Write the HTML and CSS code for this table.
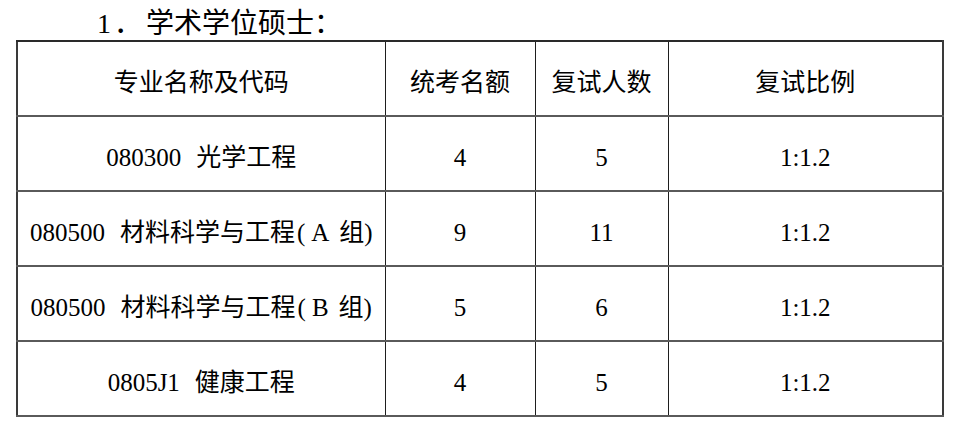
FILE: index.html
```html
<!DOCTYPE html>
<html lang="zh-CN">
<head>
<meta charset="utf-8">
<link rel="stylesheet" href="styles.css">
</head>
<body>
<div class="page">
  <h2 class="title"><span class="tnum">1</span><span class="tdot">．</span>学术学位硕士：</h2>
  <table class="grid">
    <colgroup>
      <col class="c1"><col class="c2"><col class="c3"><col class="c4">
    </colgroup>
    <thead>
      <tr><th>专业名称及代码</th><th>统考名额</th><th>复试人数</th><th>复试比例</th></tr>
    </thead>
    <tbody>
      <tr><td><span class="num">080300</span>光学工程</td><td>4</td><td>5</td><td>1:1.2</td></tr>
      <tr><td><span class="num">080500</span>材料科学与工程<span class="p-open">(</span><span class="p-a">A</span><span class="p-z">组</span><span class="p-close">)</span></td><td>9</td><td>11</td><td>1:1.2</td></tr>
      <tr><td><span class="num">080500</span>材料科学与工程<span class="p-open">(</span><span class="p-a">B</span><span class="p-z">组</span><span class="p-close">)</span></td><td>5</td><td>6</td><td>1:1.2</td></tr>
      <tr><td><span class="num">0805J1</span>健康工程</td><td>4</td><td>5</td><td>1:1.2</td></tr>
    </tbody>
  </table>
</div>
</body>
</html>
```
FILE: styles.css
```css
html, body {
  margin: 0;
  padding: 0;
  background: #fff;
}
.page {
  padding: 0 0 0 16px;
  font-family: "Liberation Serif", "Noto Sans CJK SC", serif;
  color: #000;
}
.title {
  margin: 0;
  padding: 6px 0 0 81px;
  height: 34px;
  font-size: 28px;
  font-weight: normal;
  line-height: 30px;
  white-space: nowrap;
}
.tdot {
  display: inline-block;
  width: 32px;
  padding-left: 3px;
  font-family: "Noto Sans CJK SC", sans-serif;
}
.grid {
  border-collapse: collapse;
  width: 926px;
  table-layout: fixed;
  font-size: 25px;
}
.c1 { width: 368px; }
.c2 { width: 150px; }
.c3 { width: 133px; }
.c4 { width: 275px; }
.grid th, .grid td {
  border-left: 1px solid #1e1e1e;
  border-right: 1px solid #1e1e1e;
  border-top: 2px solid #5a5a5a;
  border-bottom: 2px solid #5a5a5a;
  height: 64px;
  padding: 9px 0 0 0;
  text-align: center;
  vertical-align: middle;
  font-weight: normal;
  white-space: nowrap;
  line-height: 30px;
}
.grid th {
  border-top: 2px solid #2a2a2a;
}
.grid td:first-child, .grid th:first-child {
  border-left: 2px solid #3a3a3a;
}
.grid td:last-child, .grid th:last-child {
  border-right: 2px solid #3a3a3a;
}
.num {
  font-family: "Liberation Serif", serif;
  margin-right: 15px;
}
.p-open { margin-left: 2px; }
.p-a { margin-left: 6px; }
.p-z { margin-left: 10px; }
.p-close { margin-left: 0; }
```
